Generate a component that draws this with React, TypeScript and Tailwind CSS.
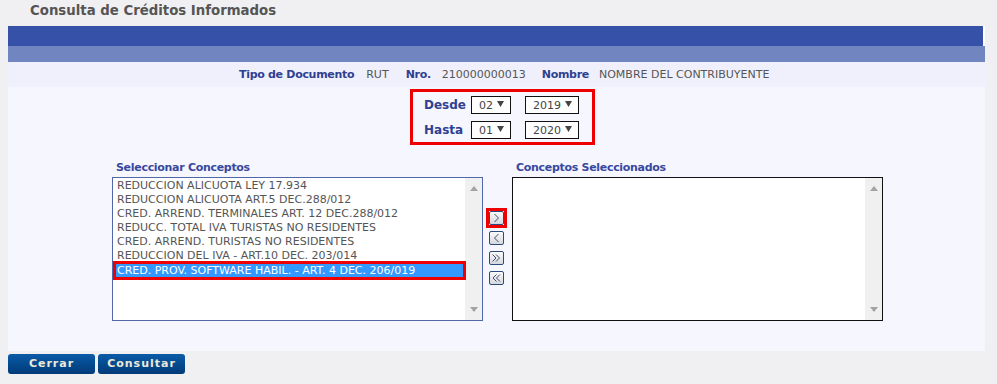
import React from "react";

const items = [
  "REDUCCION ALICUOTA LEY 17.934",
  "REDUCCION ALICUOTA ART.5 DEC.288/012",
  "CRED. ARREND. TERMINALES ART. 12 DEC.288/012",
  "REDUCC. TOTAL IVA TURISTAS NO RESIDENTES",
  "CRED. ARREND. TURISTAS NO RESIDENTES",
  "REDUCCION DEL IVA - ART.10 DEC. 203/014",
];

function Tri({ up }: { up?: boolean }) {
  return (
    <svg width="8" height="5" viewBox="0 0 8 5">
      {up ? <polygon points="0,5 8,5 4,0" fill="#a3a3a3" /> : <polygon points="0,0 8,0 4,5" fill="#a3a3a3" />}
    </svg>
  );
}

function Scroll() {
  return (
    <div className="w-[17px] h-full bg-[#f0f0f0] flex flex-col items-center justify-between pt-[8px] pb-[8px]">
      <Tri up />
      <Tri />
    </div>
  );
}

function Select({ value, w }: { value: string; w: string }) {
  return (
    <div className={`${w} h-[18px] bg-white border border-[#111] flex items-center justify-between pl-[7px] pr-[6px]`}>
      <span className="text-[11px] leading-none text-[#444]">{value}</span>
      <svg width="7" height="6" viewBox="0 0 7 6" className="mb-[2px]">
        <polygon points="0,0 7,0 3.5,6" fill="#444" />
      </svg>
    </div>
  );
}

function SmallBtn({ kind }: { kind: "r" | "l" | "rr" | "ll" }) {
  const paths: Record<string, string> = {
    r: "M5.5 3 L9.5 7 L5.5 11",
    l: "M9.5 3 L5.5 7 L9.5 11",
    rr: "M3.5 3.5 L7 7 L3.5 10.5 M7 3.5 L10.5 7 L7 10.5",
    ll: "M7.5 3.5 L4 7 L7.5 10.5 M11 3.5 L7.5 7 L11 10.5",
  };
  return (
    <div className="w-[15px] h-[14px] rounded-[2px] border border-[#2c4a7c] bg-gradient-to-b from-[#fafafa] to-[#d6d8dc] flex items-center justify-center">
      <svg width="15" height="14" viewBox="0 0 15 14" className="-m-px">
        <path d={paths[kind]} fill="none" stroke="#2c3a66" strokeWidth="0.9" />
      </svg>
    </div>
  );
}

export default function App() {
  return (
    <div
      className="w-[997px] h-[384px] bg-[#f0f0f2] overflow-hidden"
      style={{ fontFamily: '"DejaVu Sans", Verdana, sans-serif' }}
    >
      <div className="h-[26px] pl-[30px] pt-[2px] text-[13.3px] font-bold text-[#555] leading-[18px]">
        Consulta de Créditos Informados
      </div>
      <div className="ml-[8px] w-[977px]">
        <div className="flex h-[20px] bg-white">
          <div className="flex-1 bg-[#3652a8]" />
          <div className="w-[2px]" />
        </div>
        <div className="h-[16px] bg-[#7186c0]" />
        <div className="h-[25px] bg-[#f0f0fc] flex items-center pl-[231px] text-[11px] leading-none">
          <span className="font-bold text-[#2f4091] tracking-[-0.3px]">Tipo de Documento</span>
          <span className="ml-[12px] text-[#555]">RUT</span>
          <span className="ml-[17px] font-bold text-[#2f4091] tracking-[-0.3px]">Nro.</span>
          <span className="ml-[11px] text-[#555]">210000000013</span>
          <span className="ml-[16px] font-bold text-[#2f4091] tracking-[-0.3px]">Nombre</span>
          <span className="ml-[10px] text-[#555]">NOMBRE DEL CONTRIBUYENTE</span>
        </div>
        <div className="h-[264px] bg-[#f5f6fe] pt-[2px]">
          <div className="ml-[402px] w-[185px] h-[56px] border-[3px] border-[#ee0000] pl-[11px] pt-[4px] flex flex-col gap-[7px]">
            <div className="flex items-center">
              <span className="w-[47px] text-[12px] font-bold text-[#2f4091] leading-none">Desde</span>
              <Select value="02" w="w-[40px]" />
              <div className="w-[14px]" />
              <Select value="2019" w="w-[54px]" />
            </div>
            <div className="flex items-center">
              <span className="w-[47px] text-[12px] font-bold text-[#2f4091] leading-none">Hasta</span>
              <Select value="01" w="w-[40px]" />
              <div className="w-[14px]" />
              <Select value="2020" w="w-[54px]" />
            </div>
          </div>
          <div className="flex pl-[104px] mt-[15px]">
            <div className="w-[371px]">
              <div className="pl-[4px] h-[15px] text-[11px] font-bold text-[#3848a0] leading-[16px] tracking-[-0.3px]">
                Seleccionar Conceptos
              </div>
              <div className="mt-[2px] h-[144px] bg-white border border-[#5068a8] flex">
                <div className="flex-1 pt-[1px] text-[11px] leading-[14px] text-[#555]">
                  {items.map((t) => (
                    <div key={t} className="h-[14px] pl-[4px] whitespace-nowrap">
                      {t}
                    </div>
                  ))}
                  <div className="relative h-[15px] bg-[#3399ff] text-white pl-[4px] whitespace-nowrap leading-[15px]">
                    CRED. PROV. SOFTWARE HABIL. - ART. 4 DEC. 206/019
                    <div className="absolute left-0 right-[-1px] top-[-2px] bottom-[-2px] border-[3px] border-[#ee0000]" />
                  </div>
                </div>
                <Scroll />
              </div>
            </div>
            <div className="w-[29px] pt-[48px] pl-[3px] flex flex-col">
              <div className="w-[21px] border-[3px] border-[#ee0000]">
                <SmallBtn kind="r" />
              </div>
              <div className="ml-[3px] mt-[3px] flex flex-col gap-[6px]">
                <SmallBtn kind="l" />
                <SmallBtn kind="rr" />
                <SmallBtn kind="ll" />
              </div>
            </div>
            <div className="w-[371px]">
              <div className="pl-[4px] h-[15px] text-[11px] font-bold text-[#3848a0] leading-[16px] tracking-[-0.3px]">
                Conceptos Seleccionados
              </div>
              <div className="mt-[2px] h-[144px] bg-white border border-[#111] flex">
                <div className="flex-1" />
                <Scroll />
              </div>
            </div>
          </div>
        </div>
        <div className="mt-[3px] flex gap-[3px]">
          {["Cerrar", "Consultar"].map((t) => (
            <div
              key={t}
              className="w-[87px] h-[20px] rounded-[3px] bg-gradient-to-b from-[#0c5ba8] to-[#003a78] flex items-center justify-center text-[11px] font-bold text-[#ece9d8] tracking-[1px]"
            >
              {t}
            </div>
          ))}
        </div>
      </div>
    </div>
  );
}
